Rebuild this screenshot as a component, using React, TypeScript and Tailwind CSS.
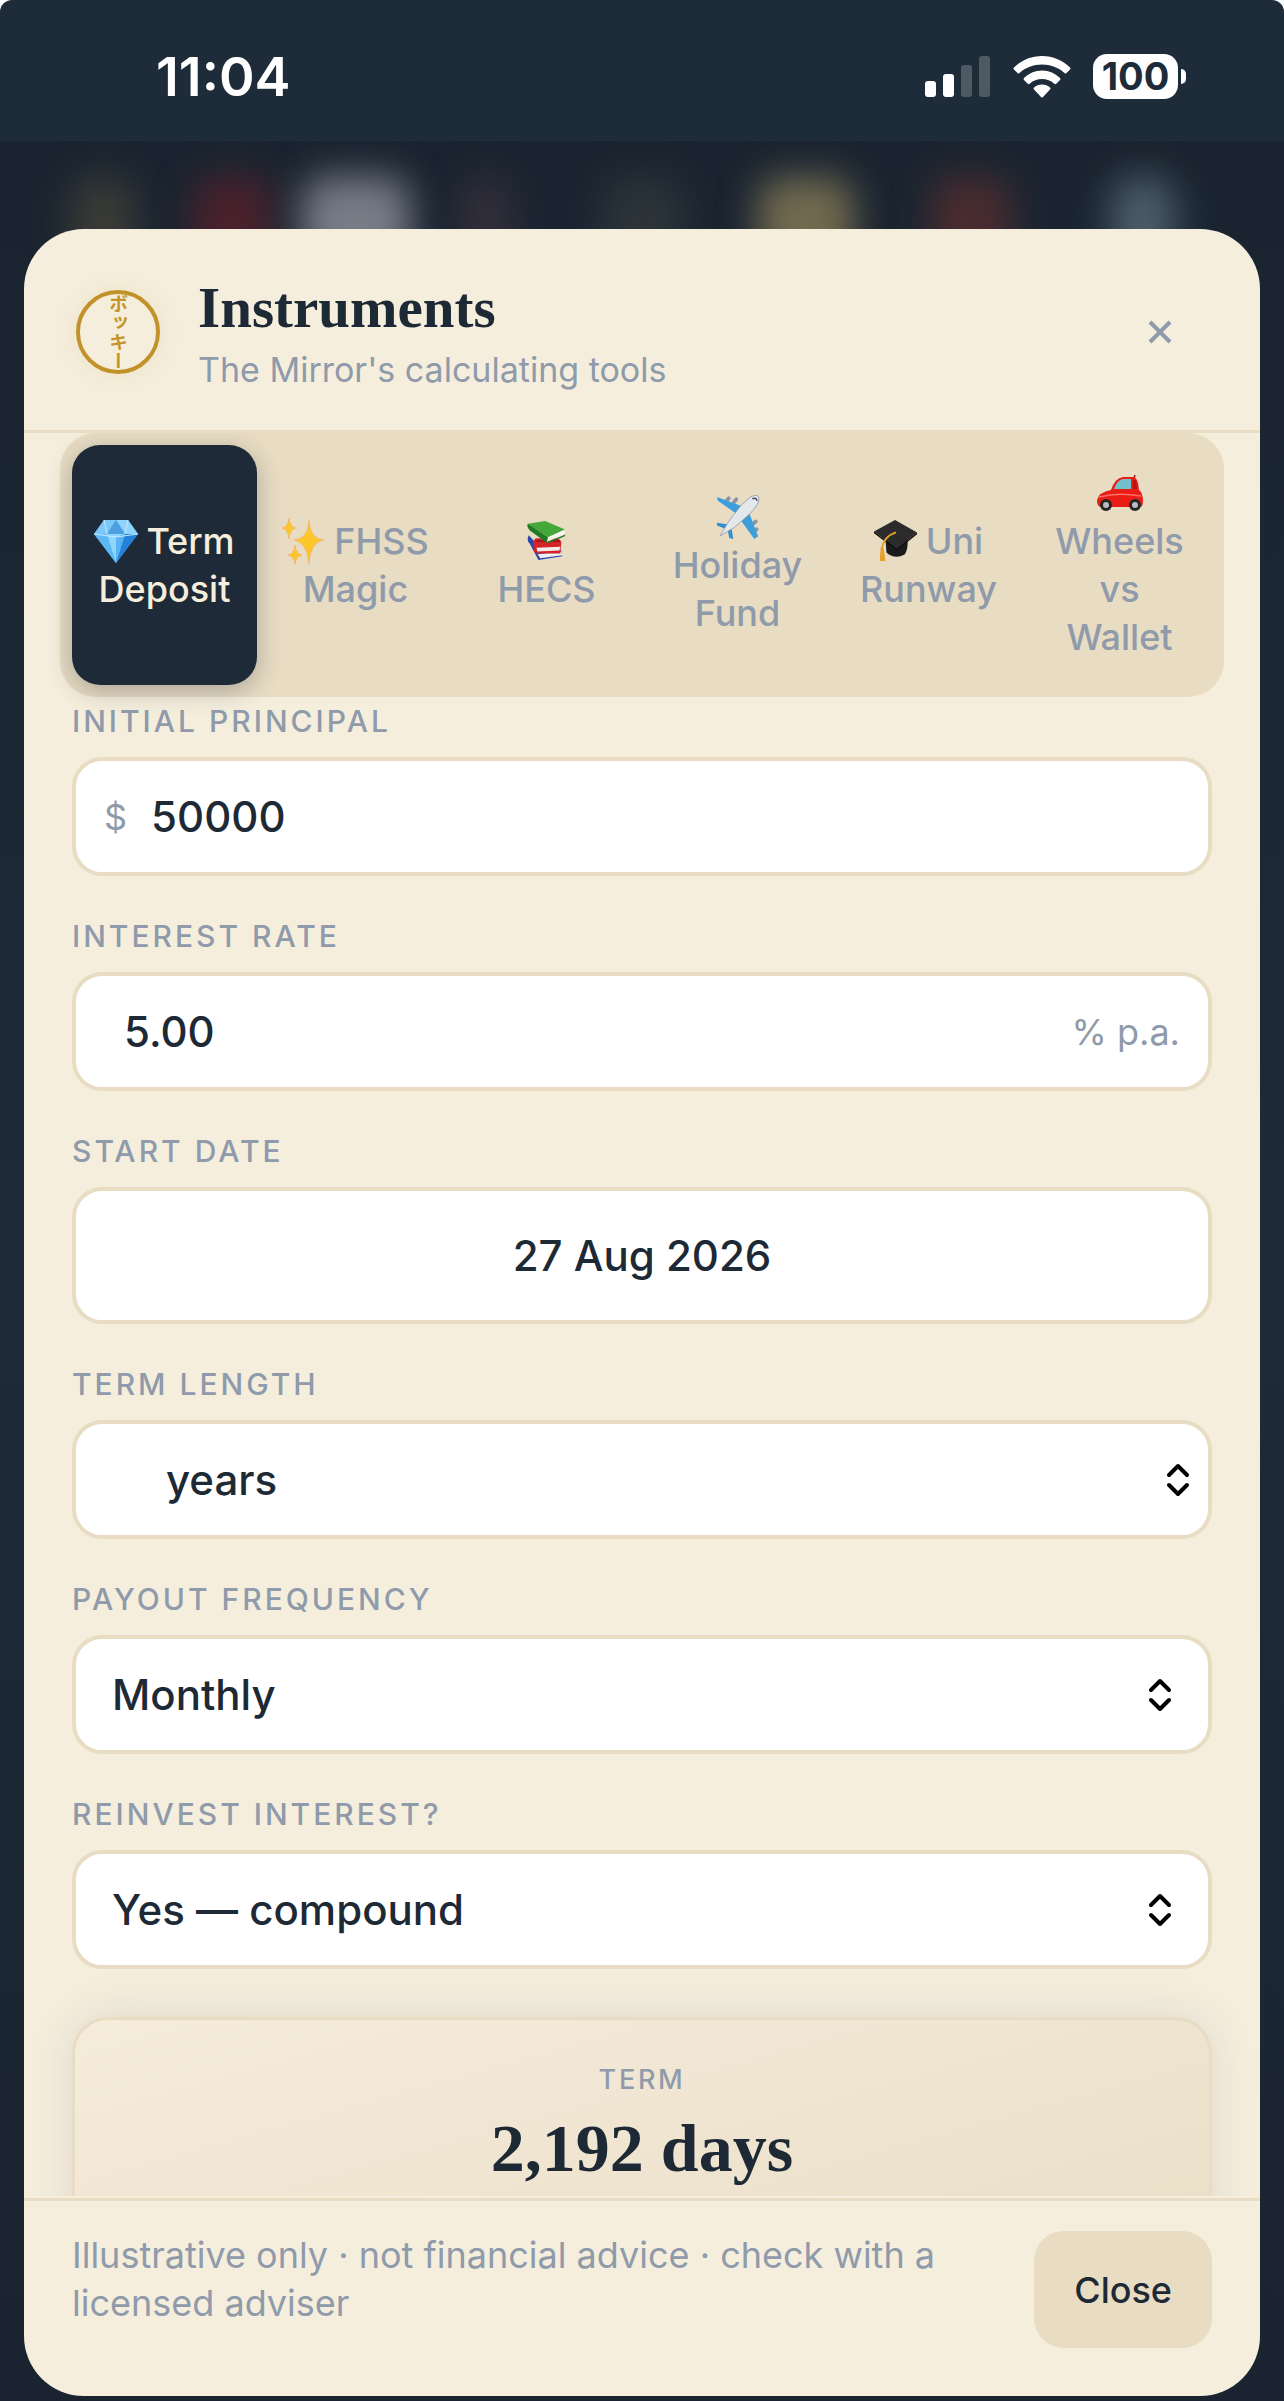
import React, { useState } from 'react';

type TabId = 'term' | 'fhss' | 'hecs' | 'holiday' | 'uni' | 'wheels';

const DiamondIcon = () => (
  <svg viewBox="0 0 44 44" className="w-11 h-11" aria-hidden="true">
    <path d="M10 1 L34 1 L44 15 L22 44 L0 15 Z" fill="#3fa9f0" />
    <path d="M10 1 L22 1 L13 15 L0 15 Z" fill="#7cc9f7" />
    <path d="M22 1 L34 1 L44 15 L31 15 Z" fill="#8fd3fa" />
    <path d="M22 1 L31 15 L13 15 Z" fill="#4d9fe0" />
    <path d="M0 15 L13 15 L22 44 Z" fill="#5cb8f5" />
    <path d="M13 15 L31 15 L22 44 Z" fill="#8fd6ff" />
    <path d="M31 15 L44 15 L22 44 Z" fill="#2582d8" />
    <path d="M22 18 L31 15 L22 44 Z" fill="#58b2f3" />
    <path d="M0 15 L22 18 L44 15 M10 1 L13 15 M34 1 L31 15" stroke="#c5e9ff" strokeWidth="1" fill="none" />
  </svg>
);

const SparklesIcon = () => (
  <svg viewBox="0 0 44 48" className="w-11 h-12" aria-hidden="true">
    <g fill="#fdc62a" stroke="#f6a96a" strokeWidth="0.6">
      <path d="M27 3 Q28 22 42 23 Q28 25 27 47 Q25 25 12 23 Q26 22 27 3 Z" />
      <path d="M7 1 Q8 10 14 11 Q8 12 7 22 Q6 12 0 11 Q6 10 7 1 Z" />
      <path d="M13 28 Q14 37 20 38 Q14 39 13 47 Q12 39 6 38 Q12 37 13 28 Z" />
    </g>
  </svg>
);

const BooksIcon = () => (
  <svg viewBox="0 0 42 42" className="w-10 h-10" aria-hidden="true">
    <path d="M2 15 Q-1 20 3 24 L12 41 L37 37 L36 31 L16 31 Z" fill="#2b46a8" />
    <path d="M11 35 L36 32 L37 36 L14 39 Z" fill="#eef0f5" />
    <path d="M9 18 L33 18 L36 22 L35 34 L11 34 Q5 33 8 29 Q4 23 9 18 Z" fill="#d5232c" />
    <path d="M10 28 L35 27 L34 31 L11 32 Z" fill="#f1ece8" />
    <path d="M10 21 L35 21" stroke="#8b1219" strokeWidth="1.5" />
    <path d="M1 3 L19 0 L40 9 L22 17 Z" fill="#45a93a" />
    <path d="M1 3 L22 17 L21 23 L3 10 Q-1 6 1 3 Z" fill="#237a24" />
    <path d="M22 17 L40 9 L39 14 L21 22 Z" fill="#f7f5ee" />
    <path d="M21 23 L40 15" stroke="#237a24" strokeWidth="1.5" />
  </svg>
);

const PlaneIcon = () => (
  <svg viewBox="0 0 46 46" className="w-11 h-11" aria-hidden="true">
    <g fill="#8b95a1">
      <rect x="10" y="1" width="4" height="8" rx="2" transform="rotate(40 12 5)" />
      <rect x="18" y="2" width="4" height="8" rx="2" transform="rotate(40 20 6)" />
      <rect x="38" y="25" width="4" height="8" rx="2" transform="rotate(50 40 29)" />
      <rect x="39" y="33" width="4" height="8" rx="2" transform="rotate(50 41 37)" />
    </g>
    <path d="M1 2 L28 12 L22 20 L2 6 Z" fill="#3c9fdc" />
    <path d="M34 17 L44 43 L40 46 L25 25 Z" fill="#3c9fdc" />
    <path d="M1 29 L14 31 L12 36 L1 32 Z" fill="#2f8fce" />
    <path d="M16 33 L18 46 L14 45 L12 36 Z" fill="#2f8fce" />
    <path d="M36 2 Q45 -2 45 4 Q45 10 34 21 L19 34 L4 43 L13 28 L26 11 Z" fill="#e4e7ec" stroke="#8b95a1" strokeWidth="0.8" />
    <path d="M38 4 Q42 2 43 6" stroke="#3a4654" strokeWidth="1.5" fill="none" />
  </svg>
);

const GradCapIcon = () => (
  <svg viewBox="0 0 46 44" className="w-11 h-11" aria-hidden="true">
    <path d="M12 20 L13 34 Q22 42 32 36 Q36 31 35 20 Z" fill="#1b1b1b" />
    <path d="M22 0 L45 13 L24 30 L0 12 Z" fill="#2b2b2b" />
    <path d="M0 12 L24 30 L45 13 L45 15 L24 32 L0 14 Z" fill="#0e0e0e" />
    <path d="M23 13 Q10 17 8 31" stroke="#e3a229" strokeWidth="2" fill="none" />
    <path d="M7 29 L10 29 L12 43 L6 43 Z" fill="#e8a02a" />
  </svg>
);

const CarIcon = () => (
  <svg viewBox="0 0 46 36" className="w-[46px] h-9" aria-hidden="true">
    <path d="M37 3 L38 0" stroke="#8f1513" strokeWidth="1.5" />
    <path d="M14 15 Q18 3 26 2 L37 2 Q41 3 42 15 Q46 18 46 26 Q46 32 43 32 L4 32 Q0 32 0 25 Q2 17 14 15 Z" fill="#ea1c16" />
    <path d="M17 14 Q20 5 26 4 L34 4 L34 14 Z" fill="#6fc0cc" />
    <path d="M36 5 L38 5 Q40 8 40 14 L36 14 Z" fill="#b41411" />
    <path d="M2 22 Q20 17 44 21" stroke="#ff6f63" strokeWidth="1.5" fill="none" />
    <circle cx="9" cy="30" r="6" fill="#262626" />
    <circle cx="9" cy="30" r="3" fill="#b9bcc0" />
    <circle cx="38" cy="30" r="6" fill="#262626" />
    <circle cx="38" cy="30" r="3" fill="#b9bcc0" />
  </svg>
);

const TABS: { id: TabId; lines: string[]; stacked?: boolean; icon: React.ReactNode }[] = [
  { id: 'term', lines: ['Term', 'Deposit'], icon: <DiamondIcon /> },
  { id: 'fhss', lines: ['FHSS', 'Magic'], icon: <SparklesIcon /> },
  { id: 'hecs', lines: ['HECS'], stacked: true, icon: <BooksIcon /> },
  { id: 'holiday', lines: ['Holiday', 'Fund'], stacked: true, icon: <PlaneIcon /> },
  { id: 'uni', lines: ['Uni', 'Runway'], icon: <GradCapIcon /> },
  { id: 'wheels', lines: ['Wheels', 'vs', 'Wallet'], stacked: true, icon: <CarIcon /> },
];

// App icons glowing through the overlay behind the sheet
const GLOWS = [
  { left: '5.5%', className: 'w-16 bg-[#3a3b35]' },
  { left: '15%', className: 'w-20 bg-[#4a212b]' },
  { left: '23.5%', className: 'w-27 bg-[#787c87]' },
  { left: '36%', className: 'w-12 bg-[#352f3b]' },
  { left: '47%', className: 'w-20 bg-[#2c3439]' },
  { left: '59%', className: 'w-24 bg-[#716a4f]' },
  { left: '72.5%', className: 'w-20 bg-[#4a2c2f]' },
  { left: '86.5%', className: 'w-16 bg-[#4c5d69]' },
];

const StatusBar = () => (
  <div className="h-[141px] shrink-0 bg-[#1e2b38] rounded-t-xl pl-39 pr-[98px] pt-3 flex items-center justify-between text-white">
    <span className="text-[54px] leading-[60px] font-semibold">11:04</span>
    <div className="flex items-center gap-[22px]">
      <svg width="66" height="42" viewBox="0 0 66 42" fill="#fff" role="img" aria-label="Signal">
        <rect x="0" y="25" width="11" height="16" rx="3" />
        <rect x="18" y="18" width="11" height="23" rx="3" />
        <rect x="36" y="9" width="11" height="32" rx="3" opacity="0.22" />
        <rect x="54" y="0" width="11" height="41" rx="3" opacity="0.22" />
      </svg>
      <svg width="58" height="42" viewBox="0 0 58 42" fill="#fff" role="img" aria-label="Wi-Fi">
        <path d="M29 0 C18 0 8 4.500 1 11.500 Q0 12.500 1 13.500 L4.500 17 Q5.500 18 6.500 17 C12.500 11.500 20.500 8.500 29 8.500 S45.500 11.500 51.500 17 Q52.500 18 53.500 17 L57 13.500 Q58 12.500 57 11.500 C50 4.500 40 0 29 0 Z" />
        <path d="M29 14.500 C22 14.500 15.500 17.500 11 22 Q10 23 11 24 L15 28 Q16 28.500 17 27.500 C20 24.500 24.500 23 29 23 S38 24.500 41 27.500 Q42 28.500 43 28 L47 24 Q48 23 47 22 C42.500 17.500 36 14.500 29 14.500 Z" />
        <path d="M29 28.500 C26 28.500 23 29.500 21 31.500 Q20 32.500 21 33.500 L28 41 Q29 42 30 41 L37 33.500 Q38 32.500 37 31.500 C35 29.500 32 28.500 29 28.500 Z" />
      </svg>
      <div className="flex items-center gap-[3px]">
        <span className="w-[85px] h-[45px] rounded-[14px] bg-white text-[#1e2b38] text-[38px] leading-[45px] font-bold text-center">100</span>
        <span className="w-[5px] h-[15px] rounded-r-full bg-white" />
      </div>
    </div>
  </div>
);

const Logo = () => (
  <div className="w-[84px] h-[84px] mx-1 mt-1 shrink-0 rounded-full border-4 border-[#c2922a] shadow-[0_0_24px_rgba(196,146,42,0.12)] flex items-center justify-center">
    <span className="[writing-mode:vertical-rl] font-['Noto_Sans_CJK_JP',sans-serif] font-bold text-[19px] leading-[24px] text-[#c5952a]">ボッキー</span>
  </div>
);

const Chevrons = ({ className }: { className: string }) => (
  <svg
    viewBox="0 0 24 34"
    className={`absolute top-1/2 -translate-y-1/2 w-6 h-[34px] pointer-events-none ${className}`}
    fill="none"
    stroke="#000"
    strokeWidth="4"
    strokeLinecap="round"
    strokeLinejoin="round"
    aria-hidden="true"
  >
    <path d="M3 12 L12 3 L21 12" />
    <path d="M3 22 L12 31 L21 22" />
  </svg>
);

const Field = ({ id, label, children }: { id: string; label: string; children: React.ReactNode }) => (
  <div className="flex flex-col gap-3">
    <label htmlFor={id} className="text-[30px] leading-[48px] font-medium uppercase tracking-widest text-[#8f9aaa]">
      {label}
    </label>
    {children}
  </div>
);

const boxClass = 'w-full h-[119px] bg-white border-4 border-[#e8dcc3] rounded-[30px] text-[42px] font-medium text-[#1e2936]';

const App: React.FC = () => {
  const [tab, setTab] = useState<TabId>('term');
  const [principal, setPrincipal] = useState('50000');
  const [rate, setRate] = useState('5.00');
  const [startDate, setStartDate] = useState('27 Aug 2026');

  return (
    <div className="h-screen bg-white font-['Inter',sans-serif] flex flex-col">
      <StatusBar />

      <div className="relative flex-1 min-h-0 bg-linear-to-b from-[#1a2430] via-[#1e2a38] to-[#1a2430] px-6 pt-22 pb-[5px] flex flex-col overflow-hidden">
        <div className="absolute inset-x-0 top-0 h-30 overflow-hidden pointer-events-none">
          {GLOWS.map((glow) => (
            <div key={glow.left} className={`absolute top-9 h-24 blur-[18px] rounded-3xl ${glow.className}`} style={{ left: glow.left }} />
          ))}
        </div>

        <div role="dialog" aria-labelledby="title" className="relative flex-1 min-h-0 bg-[#f5eedd] rounded-[60px] overflow-hidden flex flex-col">
          {/* Header */}
          <header className="shrink-0 h-51 border-b-3 border-[#e8dcc3] pl-12 pr-20 flex items-center gap-[34px]">
            <Logo />
            <div className="flex-1 mt-2">
              <h1 id="title" className="font-['Liberation_Serif',serif] font-bold text-[57px] leading-[72px] text-[#1e2936]">Instruments</h1>
              <p className="text-[34px] leading-[52px] text-[#8f9aaa]">The Mirror's calculating tools</p>
            </div>
            <button type="button" aria-label="Close dialog" className="p-2 mt-1">
              <svg viewBox="0 0 24 24" className="w-6 h-6" stroke="#8f9aaa" strokeWidth="4" fill="none">
                <path d="M2 2 L22 22 M22 2 L2 22" />
              </svg>
            </button>
          </header>

          {/* Calculator */}
          <main className="flex-1 min-h-0 overflow-hidden">
            <div role="tablist" className="mx-9 p-3 rounded-[36px] bg-[#e8dcc3] grid grid-cols-6 gap-[6px]">
              {TABS.map((t) => (
                <button
                  key={t.id}
                  type="button"
                  role="tab"
                  aria-selected={tab === t.id}
                  onClick={() => setTab(t.id)}
                  className={`rounded-[28px] py-6 text-[36px] leading-[48px] font-medium flex flex-col items-center justify-center ${
                    tab === t.id ? 'bg-[#1e2a37] text-[#f5eedd] shadow-[0_6px_24px_rgba(30,42,55,0.3)]' : 'text-[#8f9aaa]'
                  }`}
                >
                  {t.stacked && <span className="h-12 flex items-center">{t.icon}</span>}
                  {t.lines.map((line, i) => (
                    <span key={line} className="flex items-center gap-2 h-12">
                      {i === 0 && !t.stacked && t.icon}
                      {line}
                    </span>
                  ))}
                </button>
              ))}
            </div>

            <form className="px-12 flex flex-col gap-9" onSubmit={(e) => e.preventDefault()}>
              <Field id="principal" label="Initial principal">
                <div className={`${boxClass} flex items-center pl-7`}>
                  <span className="text-[36px] font-normal text-[#8f9aaa]">$</span>
                  <input id="principal" inputMode="numeric" value={principal} onChange={(e) => setPrincipal(e.target.value)} className="flex-1 min-w-0 h-full pl-6 bg-transparent outline-none" />
                </div>
              </Field>

              <Field id="rate" label="Interest rate">
                <div className={`${boxClass} flex items-center pr-7`}>
                  <input id="rate" inputMode="decimal" value={rate} onChange={(e) => setRate(e.target.value)} className="flex-1 min-w-0 h-full pl-12 bg-transparent outline-none" />
                  <span className="text-[36px] font-normal text-[#8f9aaa]">% p.a.</span>
                </div>
              </Field>

              <Field id="start" label="Start date">
                <input id="start" value={startDate} onChange={(e) => setStartDate(e.target.value)} className="w-full h-[137px] bg-white border-4 border-[#e8dcc3] rounded-[30px] text-[42px] font-medium text-[#1e2936] text-center" />
              </Field>

              <Field id="length" label="Term length">
                <div className="relative">
                  <select id="length" defaultValue="years" className={`${boxClass} appearance-none pl-[90px]`}>
                    <option value="years">years</option>
                    <option value="months">months</option>
                    <option value="days">days</option>
                  </select>
                  <Chevrons className="right-[22px]" />
                </div>
              </Field>

              <Field id="payout" label="Payout frequency">
                <div className="relative">
                  <select id="payout" defaultValue="monthly" className={`${boxClass} appearance-none pl-9`}>
                    <option value="monthly">Monthly</option>
                    <option value="quarterly">Quarterly</option>
                    <option value="annually">Annually</option>
                  </select>
                  <Chevrons className="right-10" />
                </div>
              </Field>

              <Field id="reinvest" label="Reinvest interest?">
                <div className="relative">
                  <select id="reinvest" defaultValue="yes" className={`${boxClass} appearance-none pl-9`}>
                    <option value="yes">Yes — compound</option>
                    <option value="no">No — pay out</option>
                  </select>
                  <Chevrons className="right-10" />
                </div>
              </Field>

              <section className="mt-3 h-80 rounded-[36px] border-3 border-[#e8dcc3] bg-linear-to-br from-[#f6ecdc] to-[#e8dcc3] shadow-[0_0_48px_rgba(30,42,55,0.1)] pt-9 text-center">
                <p className="text-[27px] leading-[48px] font-medium uppercase tracking-widest text-[#8f9aaa]">Term</p>
                <p className="font-['Liberation_Serif',serif] font-bold text-[68px] leading-[88px] text-[#1e2936]">2,192 days</p>
              </section>
            </form>
          </main>

          {/* Footer */}
          <footer className="shrink-0 mt-[2px] border-t-3 border-[#e8dcc3] px-12 pt-[30px] pb-12 flex items-start gap-16">
            <p className="flex-1 text-[36px] leading-[48px] text-[#8f9aaa]">
              Illustrative only · not financial advice · check with a licensed adviser
            </p>
            <button type="button" className="shrink-0 h-[117px] px-10 rounded-[30px] bg-[#e8dcc3] text-[36px] font-medium text-[#1e2936]">
              Close
            </button>
          </footer>
        </div>
      </div>
    </div>
  );
};

export default App;
